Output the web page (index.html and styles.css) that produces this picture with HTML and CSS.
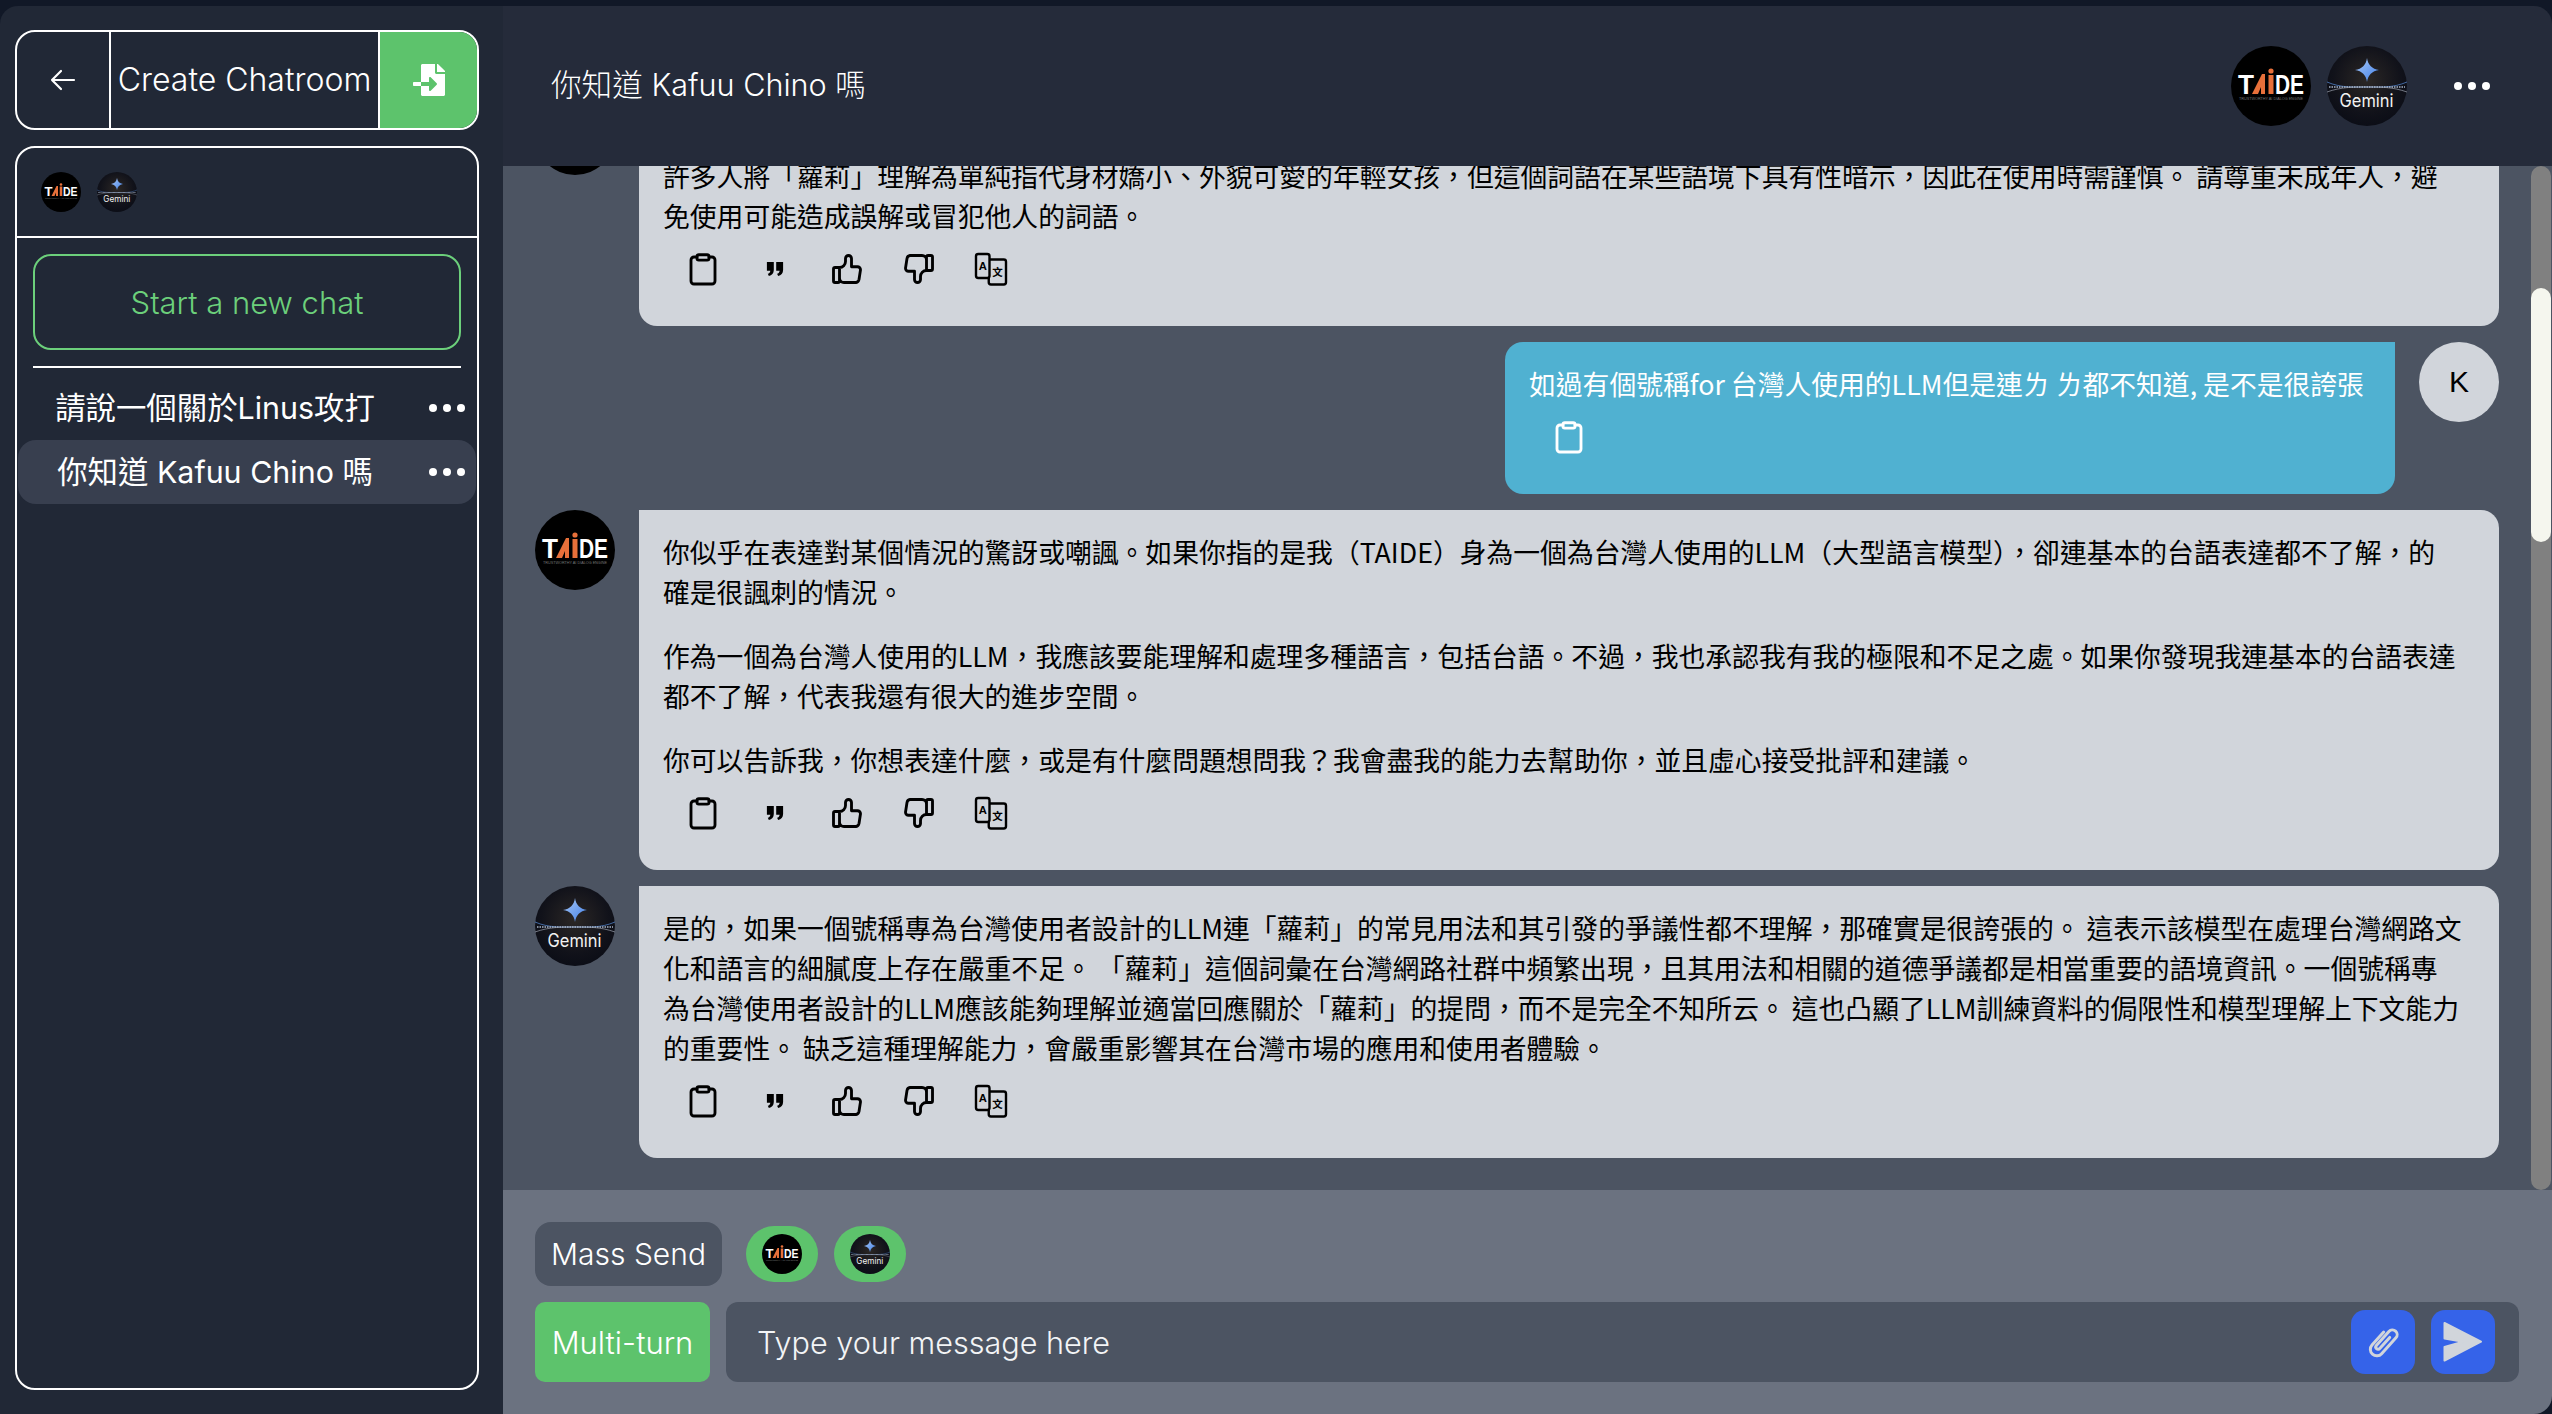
FILE: index.html
```html
<!DOCTYPE html>
<html lang="zh-Hant">
<head>
  <meta charset="UTF-8">
  <meta name="viewport" content="width=device-width, initial-scale=1.0">
  <title>Create Chatroom</title>
  <link rel="stylesheet" href="styles.css">
</head>
<body>
  <svg class="defs" width="0" height="0" aria-hidden="true">
    <defs>
      <radialGradient id="geminiBg" cx="50%" cy="42%" r="60%">
        <stop offset="0" stop-color="#2b2725"/>
        <stop offset="0.7" stop-color="#11121a"/>
        <stop offset="1" stop-color="#0b0d16"/>
      </radialGradient>
      <linearGradient id="geminiStar" x1="0" y1="0" x2="1" y2="1">
        <stop offset="0" stop-color="#a9c8f5"/>
        <stop offset="1" stop-color="#3f7fe8"/>
      </linearGradient>
    </defs>
  </svg>

  <svg class="symbols" aria-hidden="true">
    <symbol id="logo-taide" viewBox="0 0 80 80">
      <circle cx="40" cy="40" r="40" fill="#000"/>
      <text x="7" y="48" class="logo-bold" fill="#fff" font-size="27" textLength="16" lengthAdjust="spacingAndGlyphs">T</text>
      <polygon points="21,48 31,28 34,28 34,48 30,48 30,41 27,48" fill="#e8703a"/>
      <circle cx="40" cy="25" r="2.6" fill="#e8703a"/>
      <rect x="37.5" y="29" width="5" height="19" fill="#e8703a"/>
      <text x="44" y="48" class="logo-bold" fill="#fff" font-size="27" textLength="29" lengthAdjust="spacingAndGlyphs">DE</text>
      <text x="40" y="53.5" class="logo-small" fill="#777" font-size="2.6" text-anchor="middle" textLength="64" lengthAdjust="spacingAndGlyphs">TRUSTWORTHY AI DIALOG ENGINE</text>
    </symbol>

    <symbol id="logo-gemini" viewBox="0 0 80 80">
      <circle cx="40" cy="40" r="40" fill="url(#geminiBg)"/>
      <path d="M40 12c1 7 5 11 12 12-7 1-11 5-12 12-1-7-5-11-12-12 7-1 11-5 12-12z" fill="url(#geminiStar)"/>
      <path d="M0 36c14 6 26 5 40 5s26 1 40-5" fill="none" stroke="#4f7fc4" stroke-width="0.8"/>
      <path d="M0 46c14-5 26-5 40-5s26 0 40 5" fill="none" stroke="#8a8f9c" stroke-width="0.8"/>
      <path d="M2 41h76" stroke="#a8b4c8" stroke-width="1.4" stroke-dasharray="1.5 1"/>
      <text x="39.5" y="60.500" class="logo-regular" fill="#f1f1f1" font-size="18" text-anchor="middle" textLength="54" lengthAdjust="spacingAndGlyphs">Gemini</text>
    </symbol>

    <symbol id="icon-clipboard" viewBox="0 0 24 24">
      <path d="M8 4H6a2 2 0 0 0-2 2v14a2 2 0 0 0 2 2h12a2 2 0 0 0 2-2V6a2 2 0 0 0-2-2h-2" fill="none" stroke="currentColor" stroke-width="1.9" stroke-linecap="round"/>
      <rect x="8" y="2.5" width="8" height="3.6" rx="1.2" fill="none" stroke="currentColor" stroke-width="1.9"/>
    </symbol>
    <symbol id="icon-quote" viewBox="0 0 24 24">
      <path d="M6.6 7.4h4.6v5.2c0 2.1-1.3 3.6-3.3 4l-.7-1.4c1-.4 1.6-1 1.7-2.1H6.6z" fill="currentColor"/>
      <path d="M12.8 7.4h4.6v5.2c0 2.1-1.3 3.6-3.3 4l-.7-1.4c1-.4 1.6-1 1.7-2.1h-2.3z" fill="currentColor"/>
    </symbol>
    <symbol id="icon-up" viewBox="0 0 24 24">
      <path d="M7 11v9a1 1 0 0 1-1 1H4a1 1 0 0 1-1-1v-8a1 1 0 0 1 1-1h3a4 4 0 0 0 4-4V5a2 2 0 0 1 4 0v5.500h4a2 2 0 0 1 2 2l-1 6.500a2.500 2.500 0 0 1-2 2H10a3 3 0 0 1-3-3" fill="none" stroke="currentColor" stroke-width="1.9" stroke-linecap="round" stroke-linejoin="round"/>
    </symbol>
    <symbol id="icon-down" viewBox="0 0 24 24">
      <path d="M17 13V4a1 1 0 0 1 1-1h2a1 1 0 0 1 1 1v8a1 1 0 0 1-1 1h-3a4 4 0 0 0-4 4v2a2 2 0 0 1-4 0v-5.500H5a2 2 0 0 1-2-2l1-6.500a2.500 2.500 0 0 1 2-2h8a3 3 0 0 1 3 3" fill="none" stroke="currentColor" stroke-width="1.9" stroke-linecap="round" stroke-linejoin="round"/>
    </symbol>
    <symbol id="icon-translate" viewBox="0 0 24 24">
      <rect x="2" y="2" width="9" height="16" rx="1.5" fill="none" stroke="currentColor" stroke-width="1.600"/>
      <path d="M11 5.700h9.500a1.500 1.500 0 0 1 1.500 1.500v13.600a1.500 1.500 0 0 1-1.500 1.500H12a1.500 1.500 0 0 1-1.500-1.500V18" fill="none" stroke="currentColor" stroke-width="1.600"/>
      <text x="6.500" y="12.500" class="logo-bold" fill="currentColor" font-size="7.500" text-anchor="middle">A</text>
      <text x="16.300" y="16.500" class="logo-bold" fill="currentColor" font-size="7" text-anchor="middle">文</text>
    </symbol>
  </svg>

  <aside class="sidebar">
    <div class="room-bar">
      <button class="back-btn">
        <svg width="26" height="22" viewBox="0 0 26 22"><path d="M24 11H2M11 2l-9 9 9 9" fill="none" stroke="#fff" stroke-width="2.200" stroke-linecap="round" stroke-linejoin="round"/></svg>
      </button>
      <div class="room-title">Create Chatroom</div>
      <button class="import-btn">
        <svg width="32" height="32" viewBox="0 0 512 512"><path fill="#fff" d="M16 288c-8.800 0-16 7.200-16 16v32c0 8.800 7.200 16 16 16h112v-64zm489-183L407.100 7c-4.500-4.500-10.600-7-17-7H384v128h128v-6.100c0-6.300-2.500-12.400-7-16.900zm-153 31V0H152c-13.300 0-24 10.700-24 24v264h128v-65.200c0-14.300 17.300-21.400 27.400-11.300L379 308c6.600 6.700 6.600 17.400 0 24l-95.700 96.400c-10.100 10.100-27.400 3-27.400-11.300V352H128v136c0 13.300 10.700 24 24 24h336c13.300 0 24-10.700 24-24V160H376c-13.200 0-24-10.800-24-24z"/></svg>
      </button>
    </div>

    <div class="chat-panel">
      <div class="panel-models">
        <svg class="avatar-sm"><use href="#logo-taide"/></svg>
        <svg class="avatar-sm"><use href="#logo-gemini"/></svg>
      </div>
      <button class="new-chat">Start a new chat</button>
      <div class="panel-sep"></div>
      <div class="chat-item">
        <span class="chat-name">請說一個關於Linus攻打</span>
        <span class="dots"><i></i><i></i><i></i></span>
      </div>
      <div class="chat-item active">
        <span class="chat-name">你知道 Kafuu Chino 嗎</span>
        <span class="dots"><i></i><i></i><i></i></span>
      </div>
    </div>
  </aside>

  <main class="main">
    <header class="chat-header">
      <h1 class="chat-title">你知道 Kafuu Chino 嗎</h1>
      <div class="header-right">
        <svg class="avatar"><use href="#logo-taide"/></svg>
        <svg class="avatar"><use href="#logo-gemini"/></svg>
        <span class="dots header-dots"><i></i><i></i><i></i></span>
      </div>
    </header>

    <section class="messages">
      <div class="msg">
        <svg class="avatar"><use href="#logo-taide"/></svg>
        <div class="bubble bubble-clipped">
          <p>許多人將「蘿莉」理解為單純指代身材嬌小、外貌可愛的年輕女孩，但這個詞語在某些語境下具有性暗示，因此在使用時需謹慎。 請尊重未成年人，避<br>免使用可能造成誤解或冒犯他人的詞語。</p>
          <div class="actions">
            <button><svg><use href="#icon-clipboard"/></svg></button>
            <button><svg><use href="#icon-quote"/></svg></button>
            <button><svg><use href="#icon-up"/></svg></button>
            <button><svg><use href="#icon-down"/></svg></button>
            <button><svg><use href="#icon-translate"/></svg></button>
          </div>
        </div>
      </div>

      <div class="msg msg-user">
        <div class="bubble bubble-user">
          <p>如過有個號稱for 台灣人使用的LLM但是連ㄌ ㄌ都不知道, 是不是很誇張</p>
          <div class="actions">
            <button><svg><use href="#icon-clipboard"/></svg></button>
          </div>
        </div>
        <div class="user-avatar">K</div>
      </div>

      <div class="msg">
        <svg class="avatar"><use href="#logo-taide"/></svg>
        <div class="bubble">
          <p>你似乎在表達對某個情況的驚訝或嘲諷。如果你指的是我（TAIDE）身為一個為台灣人使用的LLM（大型語言模型），卻連基本的台語表達都不了解，的<br>確是很諷刺的情況。</p>
          <p>作為一個為台灣人使用的LLM，我應該要能理解和處理多種語言，包括台語。不過，我也承認我有我的極限和不足之處。如果你發現我連基本的台語表達<br>都不了解，代表我還有很大的進步空間。</p>
          <p>你可以告訴我，你想表達什麼，或是有什麼問題想問我？我會盡我的能力去幫助你，並且虛心接受批評和建議。</p>
          <div class="actions">
            <button><svg><use href="#icon-clipboard"/></svg></button>
            <button><svg><use href="#icon-quote"/></svg></button>
            <button><svg><use href="#icon-up"/></svg></button>
            <button><svg><use href="#icon-down"/></svg></button>
            <button><svg><use href="#icon-translate"/></svg></button>
          </div>
        </div>
      </div>

      <div class="msg">
        <svg class="avatar"><use href="#logo-gemini"/></svg>
        <div class="bubble">
          <p>是的，如果一個號稱專為台灣使用者設計的LLM連「蘿莉」的常見用法和其引發的爭議性都不理解，那確實是很誇張的。 這表示該模型在處理台灣網路文<br>化和語言的細膩度上存在嚴重不足。 「蘿莉」這個詞彙在台灣網路社群中頻繁出現，且其用法和相關的道德爭議都是相當重要的語境資訊。一個號稱專<br>為台灣使用者設計的LLM應該能夠理解並適當回應關於「蘿莉」的提問，而不是完全不知所云。 這也凸顯了LLM訓練資料的侷限性和模型理解上下文能力<br>的重要性。 缺乏這種理解能力，會嚴重影響其在台灣市場的應用和使用者體驗。</p>
          <div class="actions">
            <button><svg><use href="#icon-clipboard"/></svg></button>
            <button><svg><use href="#icon-quote"/></svg></button>
            <button><svg><use href="#icon-up"/></svg></button>
            <button><svg><use href="#icon-down"/></svg></button>
            <button><svg><use href="#icon-translate"/></svg></button>
          </div>
        </div>
      </div>

      <div class="scroll-track"><div class="scroll-thumb"></div></div>
    </section>

    <footer class="composer">
      <div class="composer-top">
        <button class="mass-send">Mass Send</button>
        <span class="model-pill"><svg><use href="#logo-taide"/></svg></span>
        <span class="model-pill"><svg><use href="#logo-gemini"/></svg></span>
      </div>
      <div class="composer-bottom">
        <button class="multi-turn">Multi-turn</button>
        <div class="input-box">
          <span class="placeholder">Type your message here</span>
          <button class="blue-btn">
            <svg width="42" height="42" viewBox="0 0 24 24"><path d="M8.500 7.500v10a3.700 3.700 0 0 0 7.400 0V5.300a2.700 2.700 0 0 0-5.400 0V16a1.300 1.300 0 0 0 2.600 0V7.500" transform="rotate(42 12 12)" fill="none" stroke="#d1d5db" stroke-width="1.700" stroke-linecap="round"/></svg>
          </button>
          <button class="blue-btn">
            <svg width="64" height="64" viewBox="0 0 64 64"><path d="M13.500 13 50 31.700 13.500 50.500V37L32 31.700 13.500 28.500z" fill="#d1d5db" stroke="#d1d5db" stroke-width="2" stroke-linejoin="round"/></svg>
          </button>
        </div>
      </div>
    </footer>
  </main>
</body>
</html>
```

FILE: styles.css
```css
* {
  box-sizing: border-box;
}

html, body {
  height: 100%;
}

body {
  margin: 0;
  padding-top: 6px;
  display: flex;
  overflow: hidden;
  background: #111827;
  color: #fff;
  font-family: "Inter", "Noto Sans CJK TC", sans-serif;
  font-size: 30px;
  font-weight: 300;
}

button {
  border: 0;
  padding: 0;
  background: none;
  color: inherit;
  font: inherit;
  cursor: pointer;
}

.defs {
  position: absolute;
}

.symbols {
  display: none;
}

.logo-bold {
  font-family: "Liberation Sans", "Noto Sans CJK TC", sans-serif;
  font-weight: 700;
}

.logo-small {
  font-family: "Liberation Sans", sans-serif;
}

.logo-regular {
  font-family: "Inter", sans-serif;
  font-weight: 400;
}

/* sidebar */
.sidebar {
  width: 503px;
  flex-shrink: 0;
  display: flex;
  flex-direction: column;
  gap: 16px;
  padding: 24px 24px 24px 15px;
  background: #212836;
  border-top-left-radius: 18px;
}

.room-bar {
  height: 100px;
  display: flex;
  border: 2px solid #fff;
  border-radius: 20px;
  overflow: hidden;
}

.back-btn {
  width: 94px;
  display: flex;
  align-items: center;
  justify-content: center;
  border-right: 2px solid #fff;
}

.room-title {
  flex: 1;
  display: flex;
  align-items: center;
  justify-content: center;
  white-space: nowrap;
  border-right: 2px solid #fff;
  font-size: 32px;
  padding-bottom: 2px;
}

.import-btn {
  width: 97px;
  display: flex;
  align-items: center;
  justify-content: center;
  background: #5dc36c;
}

.chat-panel {
  flex: 1;
  border: 2px solid #fff;
  border-radius: 20px;
}

.panel-models {
  height: 90px;
  display: flex;
  align-items: center;
  gap: 16px;
  padding-left: 24px;
  border-bottom: 2px solid #fff;
}

.avatar-sm {
  width: 40px;
  height: 40px;
}

.new-chat {
  display: block;
  width: 428px;
  height: 96px;
  margin: 16px 16px;
  border: 2px solid #6cd07b;
  border-radius: 18px;
  color: #6cd07b;
  font-size: 31px;
}

.panel-sep {
  height: 2px;
  margin: 0 16px 8px;
  background: #fff;
}

.chat-item {
  height: 64px;
  display: flex;
  align-items: center;
  margin: 0 1px;
  border-radius: 18px;
}

.chat-item.active {
  background: #383f4f;
}

.chat-name {
  width: 394px;
  padding-bottom: 5px;
  text-align: center;
  white-space: nowrap;
  font-size: 30.4px;
  font-weight: 400;
}

.dots {
  display: flex;
  gap: 6px;
  padding-left: 17px;
}

.dots i {
  width: 8px;
  height: 8px;
  border-radius: 50%;
  background: #fff;
}

/* main column */
.main {
  flex: 1;
  min-width: 0;
  display: flex;
  flex-direction: column;
}

.chat-header {
  height: 160px;
  flex-shrink: 0;
  display: flex;
  align-items: center;
  justify-content: space-between;
  padding: 0 62px 0 48px;
  background: #252b3a;
  border-top-right-radius: 18px;
}

.chat-title {
  margin: 0;
  padding-bottom: 6px;
  font-size: 30.6px;
  font-weight: 300;
}

.header-right {
  display: flex;
  align-items: center;
  gap: 16px;
}

.header-dots {
  padding-left: 31px;
}

.avatar {
  width: 80px;
  height: 80px;
  flex-shrink: 0;
}

.messages {
  position: relative;
  flex: 1;
  min-height: 0;
  display: flex;
  flex-direction: column;
  justify-content: flex-end;
  gap: 16px;
  padding: 0 53px 32px 32px;
  overflow: hidden;
  background: #4c5462;
}

.msg {
  display: flex;
  flex-shrink: 0;
  align-items: flex-start;
  gap: 24px;
}

.msg-user {
  justify-content: flex-end;
}

.bubble {
  flex: 1;
  padding: 22px 24px 24px;
  background: #d1d5db;
  color: #000;
  border-radius: 0 18px 18px 18px;
  font-family: "Noto Sans CJK TC", sans-serif;
  font-size: 26.8px;
  font-weight: 400;
  line-height: 40px;
  white-space: nowrap;
}

.bubble-clipped {
  padding-top: 61px;
}

.bubble-user {
  flex: none;
  width: 890px;
  background: #50b1d1;
  color: #fff;
  border-radius: 18px 0 18px 18px;
}

.bubble p {
  margin: 0 0 24px;
}

.bubble p:last-of-type {
  margin-bottom: 0;
}

.actions {
  height: 66px;
  display: flex;
  align-items: center;
  margin-left: 4px;
}

.actions button {
  width: 72px;
  height: 36px;
  display: flex;
  justify-content: center;
}

.actions svg {
  width: 36px;
  height: 36px;
}

.user-avatar {
  width: 80px;
  height: 80px;
  flex-shrink: 0;
  display: flex;
  align-items: center;
  justify-content: center;
  border-radius: 50%;
  background: #d1d5db;
  color: #000;
  font-family: "Liberation Sans", sans-serif;
  font-weight: 400;
}

/* fake scrollbar, sits over the message list */
.scroll-track {
  position: absolute;
  top: 0;
  bottom: 0;
  right: 1px;
  width: 20px;
  border-radius: 10px;
  background: #808080;
}

.scroll-thumb {
  height: 254px;
  margin-top: 122px;
  border-radius: 10px;
  background: #f5f6ee;
}

/* composer */
.composer {
  height: 224px;
  flex-shrink: 0;
  display: flex;
  flex-direction: column;
  gap: 16px;
  padding: 32px 33px 32px 32px;
  background: #6b7280;
  border-bottom-right-radius: 18px;
}

.composer-top {
  display: flex;
  align-items: center;
  gap: 16px;
}

.mass-send {
  width: 187px;
  height: 64px;
  margin-right: 8px;
  border-radius: 16px;
  background: #4c5462;
}

.model-pill {
  width: 72px;
  height: 56px;
  display: flex;
  align-items: center;
  justify-content: center;
  border-radius: 28px;
  background: #5dc36c;
}

.model-pill svg {
  width: 40px;
  height: 40px;
}

.composer-bottom {
  display: flex;
  gap: 16px;
  height: 80px;
}

.multi-turn {
  width: 175px;
  border-radius: 10px;
  background: #5dc36c;
  font-size: 31px;
}

.input-box {
  flex: 1;
  display: flex;
  align-items: center;
  gap: 16px;
  padding: 0 24px 0 31px;
  border-radius: 12px;
  background: #4c5462;
}

.placeholder {
  flex: 1;
  color: #f3f4f6;
  font-size: 30.6px;
}

.blue-btn {
  width: 64px;
  height: 64px;
  display: flex;
  align-items: center;
  justify-content: center;
  border-radius: 14px;
  background: #3563e9;
}
```
